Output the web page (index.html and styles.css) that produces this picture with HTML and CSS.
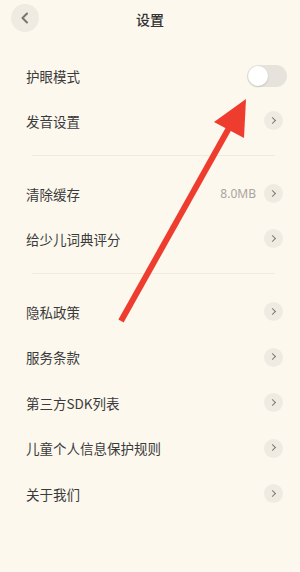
FILE: index.html
```html
<!DOCTYPE html>
<html lang="zh-CN">
<head>
    <meta charset="UTF-8">
    <meta name="viewport" content="width=device-width, initial-scale=1.0">
    <title>设置</title>
    <link rel="stylesheet" href="styles.css">
</head>
<body>
    <div class="header">
        <button class="back-btn">
            <svg width="12" height="12" viewBox="0 0 12 12"><path d="M8 1.5 L3.5 6 L8 10.5" fill="none" stroke="#77746e" stroke-width="2" stroke-linecap="round" stroke-linejoin="round"/></svg>
        </button>
        <h1>设置</h1>
    </div>

    <div class="group first-group">
        <div class="row">
            <span class="label">护眼模式</span>
            <span class="switch"><span class="knob"></span></span>
        </div>
        <div class="row">
            <span class="label">发音设置</span>
            <span class="chevron"></span>
        </div>
    </div>
    <div class="divider"></div>
    <div class="group">
        <div class="row">
            <span class="label">清除缓存</span>
            <span class="value">8.0MB</span>
            <span class="chevron"></span>
        </div>
        <div class="row">
            <span class="label">给少儿词典评分</span>
            <span class="chevron"></span>
        </div>
    </div>
    <div class="divider"></div>
    <div class="group tall-rows">
        <div class="row">
            <span class="label">隐私政策</span>
            <span class="chevron"></span>
        </div>
        <div class="row">
            <span class="label">服务条款</span>
            <span class="chevron"></span>
        </div>
        <div class="row">
            <span class="label">第三方SDK列表</span>
            <span class="chevron"></span>
        </div>
        <div class="row">
            <span class="label">儿童个人信息保护规则</span>
            <span class="chevron"></span>
        </div>
        <div class="row">
            <span class="label">关于我们</span>
            <span class="chevron"></span>
        </div>
    </div>

    <!-- red annotation arrow drawn over the screenshot -->
    <svg class="arrow" width="300" height="572" viewBox="0 0 300 572">
        <line x1="121" y1="321" x2="229" y2="128" stroke="#ee3d2f" stroke-width="6" stroke-linecap="butt"/>
        <polygon points="246,99 214,122 244,138" fill="#ee3d2f"/>
    </svg>
</body>
</html>
```

FILE: styles.css
```css
html, body {
    margin: 0;
    padding: 0;
}
body {
    width: 300px;
    height: 572px;
    background-color: #fcf8ee;
    color: #333;
    font-family: "Noto Sans CJK SC", "Noto Sans", sans-serif;
    position: relative;
    overflow: hidden;
}
.header {
    height: 38px;
    display: flex;
    align-items: center;
    justify-content: center;
    position: relative;
}
.header h1 {
    margin: 0;
    font-size: 14px;
    font-weight: 500;
    color: #333;
}
.back-btn {
    position: absolute;
    left: 11px;
    top: 4px;
    width: 28px;
    height: 28px;
    border-radius: 50%;
    border: none;
    padding: 0;
    background-color: #efebe2;
    display: flex;
    align-items: center;
    justify-content: center;
}
.group {
    display: flex;
    flex-direction: column;
}
.first-group {
    margin-top: 15px;
}
.row {
    height: 45px;
    display: flex;
    align-items: center;
    padding: 0 17px 0 26px;
}
.tall-rows .row {
    height: 45.5px;
}
.label {
    flex: 1;
    font-size: 13.5px;
    color: #3a3a3a;
}
.value {
    font-family: "Noto Sans", sans-serif;
    font-size: 12px;
    color: #aaa59c;
    margin-right: 8px;
}
.chevron {
    width: 19px;
    height: 19px;
    border-radius: 50%;
    background-color: #efebe2;
    position: relative;
}
.chevron::after {
    content: '';
    position: absolute;
    left: 5.5px;
    top: 6.5px;
    width: 4px;
    height: 4px;
    border-top: 1.8px solid #7d7a73;
    border-right: 1.8px solid #7d7a73;
    transform: rotate(45deg);
}
.switch {
    width: 40px;
    height: 22px;
    border-radius: 11px;
    background-color: #e6e3dc;
    margin-right: -4px;
    display: flex;
    align-items: center;
    padding: 0 1px;
    box-sizing: border-box;
}
.knob {
    width: 20px;
    height: 20px;
    border-radius: 50%;
    background-color: #fff;
    box-shadow: 0 1px 2px rgba(0,0,0,0.15);
}
.divider {
    height: 1px;
    background-color: #f0ebdf;
    margin: 12px 25px 15px 32px;
}
.arrow {
    position: absolute;
    left: 0;
    top: 0;
    pointer-events: none;
}
```
